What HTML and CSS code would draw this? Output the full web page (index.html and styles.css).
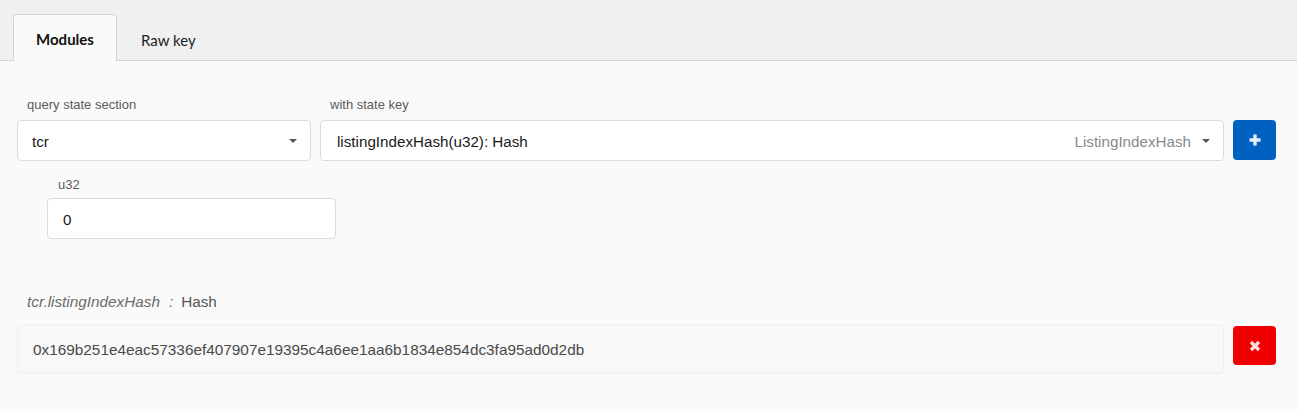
FILE: index.html
```html
<!DOCTYPE html>
<html>
<head>
<meta charset="utf-8">
<link rel="stylesheet" href="styles.css">
</head>
<body>
<div class="tabs">
  <div class="tab active">Modules</div>
  <div class="tab">Raw key</div>
</div>
<main class="content">
  <div class="query-row">
    <div class="field section">
      <label class="label">query state section</label>
      <div class="select"><span class="value">tcr</span><span class="caret"></span></div>
    </div>
    <div class="field key">
      <label class="label">with state key</label>
      <div class="select"><span class="value">listingIndexHash(u32): Hash</span><span class="hint">ListingIndexHash</span><span class="caret"></span></div>
    </div>
    <button class="btn primary" aria-label="add">
      <svg width="14" height="14" viewBox="0 0 14 14"><path d="M7 1.5v11M1.5 7h11" stroke="#fff" stroke-width="3.4" stroke-linecap="butt" opacity="0.9"/></svg>
    </button>
  </div>
  <div class="params">
    <div class="field param">
      <label class="label">u32</label>
      <div class="input">0</div>
    </div>
  </div>
  <div class="result">
    <div class="result-label"><span class="path">tcr.listingIndexHash</span><span class="colon">:</span><span class="type">Hash</span></div>
    <div class="result-row">
      <div class="output">0x169b251e4eac57336ef407907e19395c4a6ee1aa6b1834e854dc3fa95ad0d2db</div>
      <button class="btn negative" aria-label="remove">
        <svg width="12" height="12" viewBox="0 0 12 12"><path d="M2 2l8 8M10 2l-8 8" stroke="#ffe0e0" stroke-width="3.2" stroke-linecap="butt"/></svg>
      </button>
    </div>
  </div>
</main>
</body>
</html>
```
FILE: styles.css
```css
* { box-sizing: border-box; }
html, body { margin: 0; padding: 0; }
body {
  background: #fafafa;
  font-family: "Liberation Sans", Arial, sans-serif;
  color: #222;
  width: 1297px;
  height: 412px;
  overflow: hidden;
}
.tabs {
  display: flex;
  align-items: flex-end;
  height: 61px;
  padding-left: 13px;
  background: #f0f0f0;
  border-bottom: 1px solid #d4d4d5;
}
.tab {
  font-family: Lato, "Liberation Sans", sans-serif;
  font-size: 15px;
  color: #222;
  height: 46px;
  line-height: 48px;
  padding: 0 23px;
  margin-bottom: -1px;
  border: 1px solid transparent;
  border-bottom: none;
}
.tab.active {
  width: 104px;
  padding: 0;
  text-align: center;
  font-weight: 700;
  color: #111;
  background: #fafafa;
  border-color: #d4d4d5;
  border-radius: 4px 4px 0 0;
  height: 47px;
}
.content {
  padding: 36px 21px 0 17px;
}
.query-row {
  display: flex;
  align-items: flex-end;
  gap: 9px;
}
.field { display: flex; flex-direction: column; }
.label {
  font-size: 13px;
  color: #5a5a5a;
  padding-left: 10px;
  line-height: 16px;
  margin-bottom: 7px;
}
.section { width: 294px; }
.key { width: 904px; }
.select, .input {
  height: 41px;
  background: #fff;
  border: 1px solid #dcdcdd;
  border-radius: 4px;
  display: flex;
  align-items: center;
  padding: 2px 13px 0 14px;
  font-size: 15.2px;
  color: #1a1a1a;
}
.key .select { padding-left: 16px; }
.select .value { flex: 1; }
.hint { color: #8a8a8a; margin-right: 11px; }
.caret {
  width: 0; height: 0;
  border-left: 4.5px solid transparent;
  border-right: 4.5px solid transparent;
  border-top: 4.5px solid #555;
  margin-top: -1px;
}
.btn {
  width: 43px;
  height: 40px;
  border: none;
  border-radius: 4px;
  display: flex;
  align-items: center;
  justify-content: center;
  padding: 0;
  flex: none;
}
.btn.primary { background: #0061c0; margin-bottom: 1px; }
.btn.negative { background: #f00000; height: 39px; }
.params { padding: 16px 0 0 30px; }
.param { width: 289px; }
.param .label { padding-left: 11px; margin-bottom: 5px; }
.param .input { height: 41px; padding-left: 15px; }
.result { padding-top: 55px; }
.result-label {
  font-size: 15.3px;
  color: #6a6a6a;
  padding-left: 10px;
  line-height: 16px;
  margin-bottom: 14px;
}
.result-label .path { font-style: italic; }
.result-label .colon { font-style: italic; margin: 0 8px 0 9px; }
.result-label .type { color: #555; }
.result-row {
  display: flex;
  gap: 9px;
  align-items: flex-start;
}
.output {
  width: 1207px;
  height: 50px;
  background: #f8f8f8;
  border: 1px solid #efefef;
  border-radius: 4px;
  display: flex;
  align-items: center;
  padding: 1px 15px 0 15px;
  font-size: 15.35px;
  color: #4a4a4a;
}
.result-row .btn { margin-top: 2px; }
```
